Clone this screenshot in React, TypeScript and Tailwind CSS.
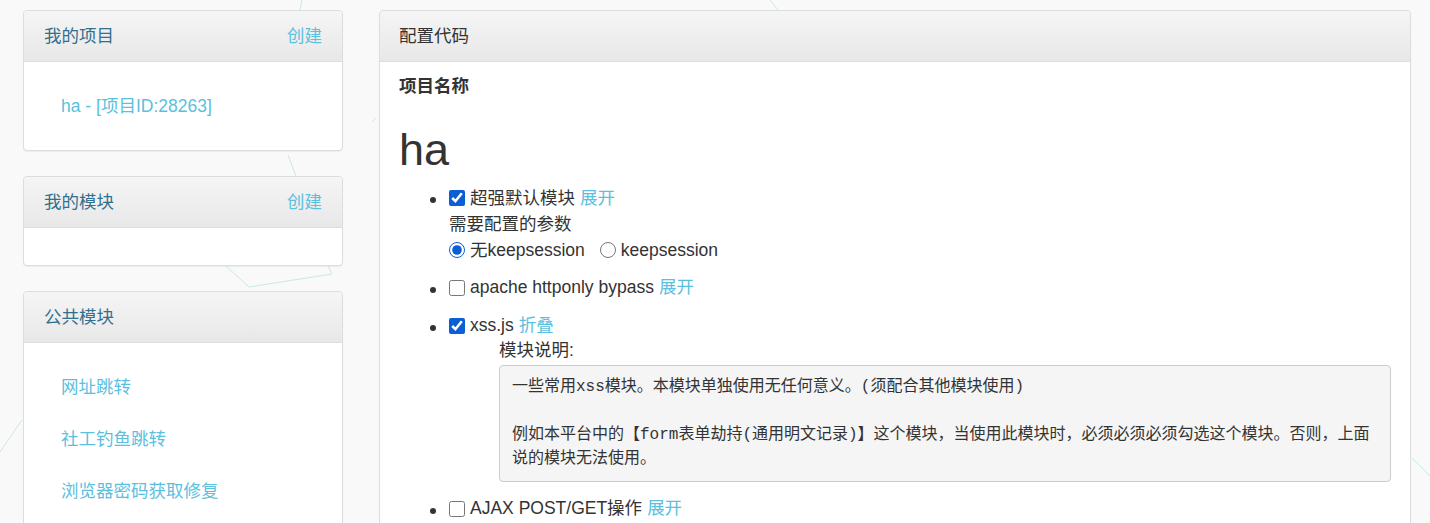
import React from "react";

const font = { fontFamily: '"Liberation Sans", "Noto Sans CJK SC", sans-serif' };

function PanelHead({ title, action }: { title: string; action?: string }) {
  return (
    <div className="flex h-[51px] items-center justify-between rounded-t-[4px] border-b border-[#ddd] bg-linear-to-b from-[#f5f5f5] to-[#e8e8e8] px-5">
      <span className="text-[17.5px] text-[#31708f]">{title}</span>
      {action && <a className="text-[17.5px] text-[#5bc0de]">{action}</a>}
    </div>
  );
}

function LinkList({ items }: { items: string[] }) {
  return (
    <ul className="py-[18px] pl-[37px]">
      {items.map((t) => (
        <li key={t} className="flex h-[52px] items-center text-[17.5px] text-[#5bc0de]">
          {t}
        </li>
      ))}
    </ul>
  );
}

function Check({ checked, label, action, h = "h-[25px]" }: { checked?: boolean; label: string; action: string; h?: string }) {
  return (
    <div className={`flex items-center ${h}`}>
      <input
        type="checkbox"
        defaultChecked={checked}
        className="m-0 mr-[5px] h-4 w-4 accent-[#0b5fd6]"
      />
      <span>{label}</span>
      <a className="ml-[5px] text-[#5bc0de]">{action}</a>
    </div>
  );
}

const preText =
  "一些常用xss模块。本模块单独使用无任何意义。(须配合其他模块使用)\n\n例如本平台中的【form表单劫持(通用明文记录)】这个模块，当使用此模块时，必须必须必须勾选这个模块。否则，上面\n说的模块无法使用。";

export default function App() {
  return (
    <div className="relative min-h-[523px] overflow-hidden bg-[#f9f9f9] text-[#333]" style={font}>
      <svg className="pointer-events-none absolute inset-0 h-full w-full" width="1430" height="523">
        <g stroke="#bfe6da" strokeWidth="1" opacity="0.8">
          <line x1="770" y1="0" x2="778" y2="10" />
          <line x1="302" y1="0" x2="300" y2="10" />
          <line x1="288" y1="155" x2="296" y2="176" />
          <line x1="226" y1="266" x2="249" y2="287" />
          <line x1="249" y1="287" x2="332" y2="274" />
          <line x1="328" y1="266" x2="332" y2="274" />
          <line x1="0" y1="452" x2="22" y2="420" />
          <line x1="1412" y1="458" x2="1430" y2="476" />
          <line x1="372" y1="122" x2="376" y2="118" />
        </g>
      </svg>

      <div className="relative flex items-start pt-[10px] pl-[23px]">
        <div className="flex w-[320px] shrink-0 flex-col gap-[25px]">
          <div className="rounded-[4px] border border-[#ddd] bg-white shadow-[0_1px_1px_rgba(0,0,0,0.05)]">
            <PanelHead title="我的项目" action="创建" />
            <LinkList items={["ha - [项目ID:28263]"]} />
          </div>
          <div className="rounded-[4px] border border-[#ddd] bg-white shadow-[0_1px_1px_rgba(0,0,0,0.05)]">
            <PanelHead title="我的模块" action="创建" />
            <div className="h-[37px]" />
          </div>
          <div className="rounded-[4px] border border-[#ddd] bg-white shadow-[0_1px_1px_rgba(0,0,0,0.05)]">
            <PanelHead title="公共模块" />
            <LinkList items={["网址跳转", "社工钓鱼跳转", "浏览器密码获取修复"]} />
          </div>
        </div>

        <div className="ml-[36px] w-[1032px] shrink-0 rounded-[4px] border border-[#ddd] bg-white shadow-[0_1px_1px_rgba(0,0,0,0.05)]">
          <div className="flex h-[51px] items-center rounded-t-[4px] border-b border-[#ddd] bg-linear-to-b from-[#f5f5f5] to-[#e8e8e8] px-[19px]">
            <span className="text-[17.5px] text-[#333]">配置代码</span>
          </div>
          <div className="px-[19px] pt-[12px] pb-[14px] text-[17.5px] leading-[25px]">
            <div className="font-bold">项目名称</div>
            <h1 className="mt-[26px] mb-[11px] text-[45px] leading-[49px] font-normal">ha</h1>
            <ul className="list-disc pl-[50px] marker:text-[20px]">
              <li className="mb-[12px]">
                <Check checked label="超强默认模块" action="展开" h="h-[26px]" />
                <div className="flex h-[26px] items-center">需要配置的参数</div>
                <div className="flex h-[26px] items-center">
                  <label className="inline-flex items-center">
                    <input type="radio" name="ks" defaultChecked className="m-0 mr-[5px] h-4 w-4 accent-[#0b5fd6]" />
                    无keepsession
                  </label>
                  <label className="ml-[15px] inline-flex items-center">
                    <input type="radio" name="ks" className="m-0 mr-[5px] h-4 w-4 accent-[#0b5fd6]" />
                    keepsession
                  </label>
                </div>
              </li>
              <li className="mb-[13px]">
                <Check label="apache httponly bypass" action="展开" />
              </li>
              <li className="mb-[14px]">
                <Check checked label="xss.js" action="折叠" />
                <div className="ml-[50px]">
                  <div className="h-[25px]">模块说明:</div>
                  <pre
                    className="mt-[2px] whitespace-pre rounded-[4px] border border-[#ccc] bg-[#f5f5f5] px-[12px] pt-[9px] pb-[10px] text-[16px] leading-[24px] text-[#333]"
                    style={{ fontFamily: '"Liberation Mono", "Noto Sans CJK SC", monospace' }}
                  >
                    {preText}
                  </pre>
                </div>
              </li>
              <li className="mb-[14px]">
                <Check label="AJAX POST/GET操作" action="展开" />
              </li>
            </ul>
          </div>
        </div>
      </div>
    </div>
  );
}
